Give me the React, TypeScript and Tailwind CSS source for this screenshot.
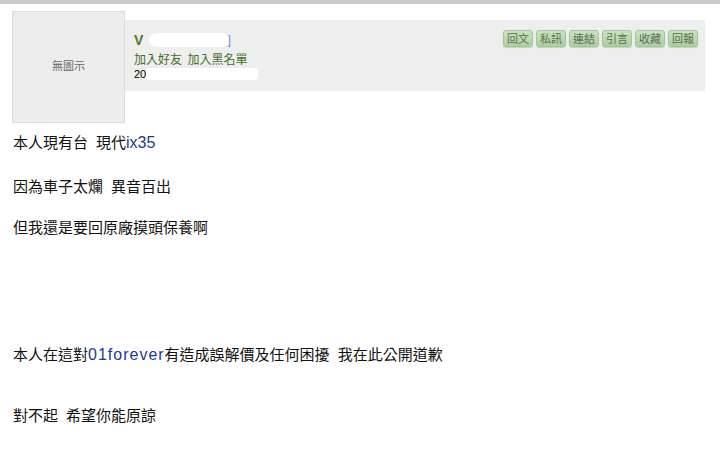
import React from "react";

const cjk = { fontFamily: '"Noto Sans CJK TC", "Noto Sans", sans-serif' };
const latin = { fontFamily: '"Liberation Sans", Arial, sans-serif' };

function Gap() {
  return <span className="inline-block w-[8px]"> </span>;
}

export default function App() {
  const buttons = ["回文", "私訊", "連結", "引言", "收藏", "回報"];
  return (
    <div className="w-[720px] h-[471px] bg-white overflow-hidden" style={cjk}>
      <div className="h-[4px] bg-[#ccc9cc]" />
      <div className="flex mt-[7px] ml-[12px] mr-[15px]">
        <div className="w-[113px] h-[112px] shrink-0 border border-[#dcdcdc] bg-[#ededed] flex items-center justify-center text-[11px] text-[#666]">
          <span className="-mt-[3px]">無圖示</span>
        </div>
        <div className="flex-1 h-[71px] mt-[9px] bg-[#eeeeee] flex justify-between pl-[9px] pr-[7px]">
          <div className="flex flex-col pt-[12px]">
            <div className="flex items-center h-[16px]">
              <span className="text-[14px] font-bold text-[#4a7a1e] leading-none" style={latin}>V</span>
              <span className="ml-[6px] w-[80px] h-[14px] bg-white rounded-full" />
              <span className="text-[#4a78c8] text-[12px] leading-none -ml-[2px]">]</span>
            </div>
            <div className="text-[12px] text-[#3f6e2a] leading-[16px] mt-[3px]">加入好友&nbsp;&nbsp;加入黑名單</div>
            <div className="flex items-center h-[12px] mt-[1px]">
              <span className="text-[11px] text-black leading-none" style={latin}>20</span>
              <span className="w-[112px] h-[12px] bg-white rounded-sm" />
            </div>
          </div>
          <div className="flex gap-[3px] pt-[10px]">
            {buttons.map((b) => (
              <div
                key={b}
                className="w-[30px] h-[17px] rounded-[3px] border border-[#a3c698] bg-gradient-to-b from-[#c8e4bd] to-[#accf9f] text-[11px] text-[#5c6b58] flex items-center justify-center leading-none shadow-[0_1px_1px_rgba(0,0,0,0.15)]"
              >
                {b}
              </div>
            ))}
          </div>
        </div>
      </div>
      <div className="ml-[13px] text-[15px] text-[#111] leading-[20px]">
        <p className="mt-[9px]">
          本人現有台<Gap />現代<span className="text-[#1c3a94] text-[16px]" style={latin}>ix35</span>
        </p>
        <p className="mt-[23px]">因為車子太爛<Gap />異音百出</p>
        <p className="mt-[21px]">但我還是要回原廠摸頭保養啊</p>
        <p className="mt-[107px]">
          本人在這對<span className="text-[#1c3a94] text-[16px] tracking-[1px]" style={latin}>01forever</span>有造成誤解價及任何困擾<Gap />我在此公開道歉
        </p>
        <p className="mt-[40px]">對不起<Gap />希望你能原諒</p>
      </div>
    </div>
  );
}
